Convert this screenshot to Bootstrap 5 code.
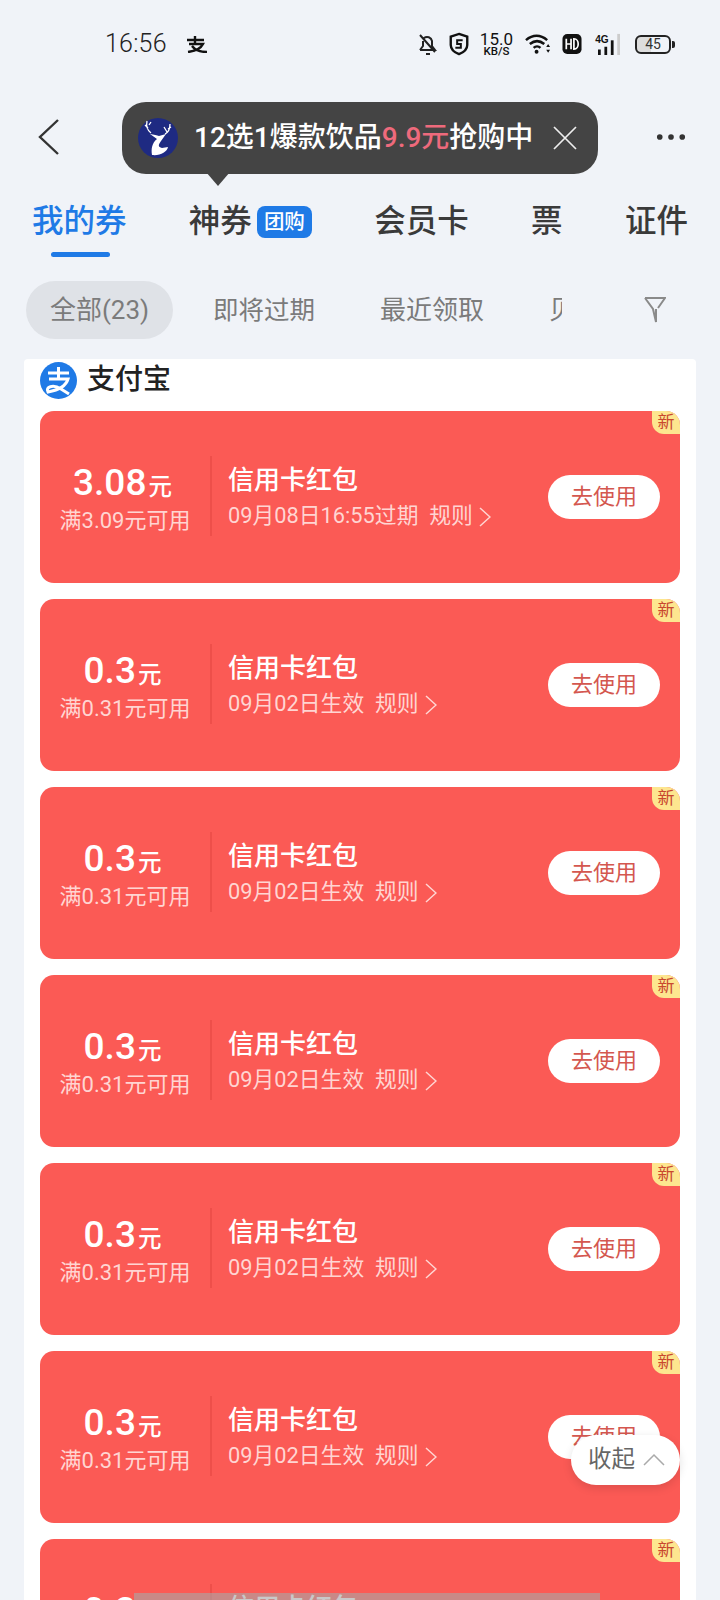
<!DOCTYPE html>
<html lang="zh"><head><meta charset="utf-8">
<link href="https://cdn.jsdelivr.net/npm/bootstrap@5.3.0/dist/css/bootstrap.min.css" rel="stylesheet">
<style>
html,body{height:1600px;overflow:hidden}
body{background:#f0f3f8;font-family:Roboto,"Noto Sans CJK SC",sans-serif;position:relative;width:720px}
.stat{height:88px;padding:0 49px 0 105px;color:#222}
.stat-time{font-size:25px;font-weight:300;letter-spacing:.2px;width:81px}
.kb1{font-size:17px;line-height:14px;font-weight:400;color:#111}
.kb2{font-size:11.5px;line-height:11px;font-weight:500;color:#111}
.batt{width:36px;height:19px;border:2px solid #222;border-radius:6px;font-size:14px;line-height:15px;text-align:center;color:#333;background:linear-gradient(90deg,#ddd 45%,transparent 45%);position:relative}
.batt:after{content:"";position:absolute;right:-6px;top:4px;width:3px;height:7px;background:#222;border-radius:0 2px 2px 0}
.g10{margin-left:10px}.g11{margin-left:11px}.g12{margin-left:12px}
.head{height:92px;padding:5px 34px 0 36px}
.dots{margin-top:1px}
.tabs{height:72px;padding:12px 32px 0;font-size:31.5px;font-weight:500;color:#3a3a3a;line-height:60px}
.tab-on{color:#1f7ae6}
.tuan{background:#1f7ae6;color:#fff;font-size:20.5px;font-weight:500;border-radius:8px;height:32px;width:55px;line-height:32px;text-align:center;margin-left:5px}
.uline{width:59px;height:5px;border-radius:3px;background:#1f7ae6;margin-left:51px}
.filt{height:58px;margin-top:24px;padding-left:26px;font-size:26px;color:#7b7b7b}
.pillon{width:147px;height:58px;border-radius:29px;background:#dfe2e7}
.ms-filt1{margin-left:40px;font-size:25.500px}.ms-filt2{margin-left:65px}.ms-filt3{margin-left:65px;width:13px;overflow:hidden;display:inline-block;white-space:nowrap}.ms-filt4{margin-left:82px}
.panel{background:#fff;margin:20px 24px 0;padding:0 16px;height:1300px;border-radius:4px 4px 0 0}
.ptitle{height:42px;margin-bottom:10px;font-size:28px;font-weight:500;color:#222;gap:10px}
.cp{height:172px;background:#fb5a55;border-radius:14px;margin-bottom:16px;color:#fff;overflow:hidden}
.cp-l{width:170px;padding-top:50px;text-align:center;line-height:1}
.amt{font-size:37px;font-weight:500;line-height:44px;padding-right:5px}
.amt small{font-size:23.5px;font-weight:500;margin-left:2px}
.cond{font-size:22px;color:#ffd5d2;line-height:28px;margin-top:-2px}
.vline{width:2px;height:80px;background:#ee4f4a;margin-top:45px}
.cp-m{padding:51px 0 0 16px;flex:1}
.nm{font-size:26px;font-weight:500;line-height:36px}
.dt{font-size:21.8px;color:#ffd5d2;line-height:36px;white-space:nowrap}
.dt svg{margin-left:1px}
.use{position:absolute;right:20px;top:64px;width:112px;height:44px;background:#fff;color:#d4574f;font-size:22px;line-height:44px;padding:0;border:0}
.newt{position:absolute;right:0;top:0;width:28px;height:23px;background:#fde68f;color:#c9482e;font-size:17px;line-height:23px;text-align:center;border-bottom-left-radius:12px}
.tip{position:absolute;left:122px;top:102px;width:476px;height:72px;border-radius:24px;background:#444;color:#fff;font-size:28px;font-weight:500;padding:0 20px 0 16px}
.tip:after{content:"";position:absolute;left:84px;top:70px;border:12px solid transparent;border-top:14px solid #444;border-bottom:0}
.tip b{color:#ee6a7c;font-weight:500}
.fold{position:absolute;left:571px;top:1435px;width:109px;height:50px;border-radius:25px;background:#fff;color:#666;font-size:23.500px;box-shadow:0 3px 10px rgba(0,0,0,.12);padding-left:17px}
.bandx{position:absolute;left:134px;top:1593px;width:466px;height:40px;background:rgba(168,168,168,.615)}
</style></head><body>
<div class="stat d-flex align-items-center">
 <span class="stat-time">16:56</span>
 <svg width="22" height="17" viewBox="0 0 22 17" fill="none" stroke="#111" stroke-width="2.400"><path d="M1 4h17M9 0v7M3 8h14c-2 4-7 7-15 8M6 10c3 4 8 6 15 6"/></svg>
 <div class="flex-grow-1"></div>
 <svg width="20" height="22" viewBox="0 0 20 22" fill="none" stroke="#222" stroke-width="2"><path d="M2 17h15l-3-4V8a5 5 0 0 0-8-3M5 8v5l-3 4M8 21h4M2 2l15 17"/></svg>
 <svg class="g10" width="22" height="24" viewBox="0 0 24 26" fill="none" stroke="#111" stroke-width="2.600"><path d="M12 2l9 3v9c0 5-4 8-9 10-5-2-9-5-9-10V5z"/><path d="M16 9h-6v4h4v4H8" stroke-width="2.200"/></svg>
 <div class="g10 text-center kbox"><div class="kb1">15.0</div><div class="kb2">KB/S</div></div>
 <svg class="g12" width="27" height="22" viewBox="0 0 28 22" fill="none" stroke="#111" stroke-width="2.600"><path d="M1 7c7-6 15-6 22 0M5 11c5-4 10-4 15 0M9 15c2-2 5-2 7 0"/><circle cx="12" cy="19" r="2" fill="#111" stroke="none"/><path d="M22 14l2-3 2 3zM22 17l2 3 2-3z" fill="#111" stroke="none"/></svg>
 <svg class="g10" width="20" height="20" viewBox="0 0 20 21"><rect width="20" height="21" rx="5" fill="#111"/><path d="M4 5v11M9 5v11M4 10.500h5M12 5v11c6 0 6-11 0-11z" fill="none" stroke="#fff" stroke-width="1.800"/></svg>
 <svg class="g12" width="30" height="22" viewBox="0 0 30 24"><rect x="3" y="18" width="3" height="6" fill="#111"/><rect x="10" y="15" width="3" height="9" fill="#111"/><rect x="17" y="8" width="3" height="16" fill="#111"/><rect x="24" y="1" width="3" height="23" fill="#ccc"/><text x="0" y="11" font-size="11" font-weight="700" fill="#111" font-family="Liberation Sans">4G</text></svg>
 <div class="batt g11">45</div>
</div>
<div class="head d-flex align-items-center justify-content-between">
 <svg width="26" height="38" viewBox="0 0 26 38" fill="none" stroke="#333" stroke-width="2.400"><path d="M22 2L4 19l18 17"/></svg>
 <svg class="dots" width="30" height="8" viewBox="0 0 32 8" fill="#333"><circle cx="4" cy="4" r="3"/><circle cx="16" cy="4" r="3"/><circle cx="28" cy="4" r="3"/></svg>
</div>
<div class="tabs d-flex align-items-center justify-content-between">
 <span class="tab-on">我的券</span>
 <span class="d-flex align-items-center">神券<span class="tuan">团购</span></span>
 <span>会员卡</span><span>票</span><span>证件</span>
</div>
<div class="uline"></div>
<div class="filt d-flex align-items-center">
 <div class="pillon d-flex align-items-center justify-content-center">全部(23)</div>
 <span class="ms-filt1">即将过期</span><span class="ms-filt2">最近领取</span><span class="ms-filt3">贝</span>
 <svg class="ms-filt4" width="22" height="26" viewBox="0 0 22 26" fill="none" stroke="#8a8a8a" stroke-width="2"><path d="M1 1h20l-7 10M1 1l8 11 3 13V12"/></svg>
</div>
<div class="panel">
 <div class="ptitle d-flex align-items-center">
  <svg width="37" height="37" viewBox="0 0 37 37"><circle cx="18.500" cy="18.500" r="18.500" fill="#1f7ae6"/><path d="M8 11h21M18.500 5v12M9 17h19c-2 7-9 11-20 13-3-5 5-8 13-3l8 5" fill="none" stroke="#fff" stroke-width="3"/></svg>
  <span>支付宝</span>
 </div>
 <div id="list"></div>
</div>
<div class="tip d-flex align-items-center">
 <svg width="40" height="40" viewBox="0 0 40 40"><circle cx="20" cy="20" r="20" fill="#1e2a82"/><path d="M14 37c-1-6 0-12 5-16l-7-5c4 1 7 1 9 2l7-2-5 7c-3 4-3 6 1 7l6-1c-1 5-8 9-16 8z" fill="#fff"/><path d="M13 15C9 12 8 8 9 3M10 10L7 7M11 7l2-3M27 16c4-2 5-6 5-10M30 11l3-2M29 14l-3-5" fill="none" stroke="#fff" stroke-width="1.300"/></svg>
 <span class="ms-3 flex-grow-1 text-nowrap">12选1爆款饮品<b>9.9元</b>抢购中</span>
 <svg width="26" height="26" viewBox="0 0 26 26" stroke="#eee" stroke-width="1.700"><path d="M2 2l22 22M24 2L2 24"/></svg>
</div>
<div class="fold d-flex align-items-center">收起<svg class="ms-2" width="22" height="14" viewBox="0 0 22 14" fill="none" stroke="#aaa" stroke-width="1.500"><path d="M1 12L11 2l10 10"/></svg></div>
<div class="bandx"></div>
<script>
var h='';[['3.08','满3.09元可用','09月08日16:55过期']].concat(Array(6).fill(['0.3','满0.31元可用','09月02日生效'])).forEach(function(c){
h+='<div class="cp d-flex position-relative"><div class="cp-l"><div class="amt">'+c[0]+'<small>元</small></div><div class="cond">'+c[1]+'</div></div><div class="vline"></div><div class="cp-m"><div class="nm">信用卡红包</div><div class="dt">'+c[2]+'&nbsp; 规则 <svg width="12" height="20" viewBox="0 0 12 20" fill="none" stroke="#ffd5d2" stroke-width="1.500"><path d="M1 1l10 9-10 9"/></svg></div></div><button class="use btn rounded-pill">去使用</button><div class="newt">新</div></div>';
});document.getElementById('list').innerHTML=h;
</script>
</body></html>
